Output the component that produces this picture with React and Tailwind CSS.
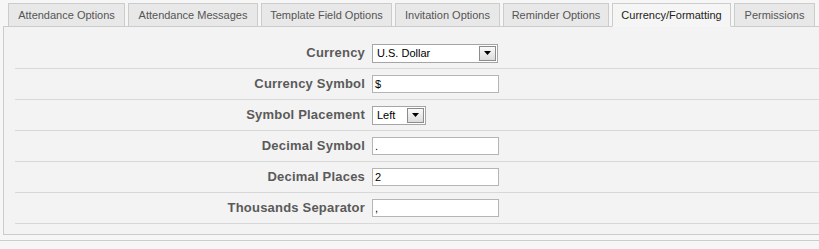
import React from 'react';

const tabs = [
  { label: 'Attendance Options', w: 'w-[117px]' },
  { label: 'Attendance Messages', w: 'w-[130px]' },
  { label: 'Template Field Options', w: 'w-[131px]' },
  { label: 'Invitation Options', w: 'w-[105px]' },
  { label: 'Reminder Options', w: 'w-[106px]' },
  { label: 'Currency/Formatting', w: 'w-[119px]', active: true },
  { label: 'Permissions', w: 'w-[81px]' },
];

function Arrow() {
  return (
    <span className="flex items-center justify-center w-[17px] h-[15px] border border-[#8c8c8c] bg-gradient-to-b from-[#fafafa] to-[#dcdcdc]">
      <svg width="7" height="4" viewBox="0 0 7 4">
        <path d="M0 0h7L3.5 4z" fill="#000" />
      </svg>
    </span>
  );
}

function Select({ value, w }) {
  return (
    <div className={`flex items-center justify-between h-[19px] ${w} bg-white border border-[#a5a5a5] pl-[4px] pr-[1px] text-[11px] text-black`}>
      <span>{value}</span>
      <Arrow />
    </div>
  );
}

function TextBox({ value }) {
  return (
    <div className="flex items-center h-[18px] w-[127px] bg-white border border-[#b5b5b5] px-[2px] text-[11px] text-black leading-none">
      {value}
    </div>
  );
}

const rows = [
  { label: 'Currency', field: <Select value="U.S. Dollar" w="w-[126px]" /> },
  { label: 'Currency Symbol', field: <TextBox value="$" /> },
  { label: 'Symbol Placement', field: <Select value="Left" w="w-[54px]" /> },
  { label: 'Decimal Symbol', field: <TextBox value="." /> },
  { label: 'Decimal Places', field: <TextBox value="2" /> },
  { label: 'Thousands Separator', field: <TextBox value="," /> },
];

export default function App() {
  return (
    <div className="w-[819px] h-[249px] overflow-hidden bg-[#f6f6f6] font-['Liberation_Sans',Arial,sans-serif]">
      {/* tabs */}
      <div className="flex items-end gap-[3px] pl-[8px] pt-[3px] relative z-10">
        {tabs.map((t) => (
          <div
            key={t.label}
            className={`${t.w} h-[24px] -mb-px flex items-center justify-center border text-[11px] whitespace-nowrap ${
              t.active
                ? 'bg-[#f5f5f5] border-[#cccccc] border-b-[#f5f5f5] text-[#222]'
                : 'bg-[#e8e8e8] border-[#cccccc] text-[#555]'
            }`}
          >
            {t.label}
          </div>
        ))}
      </div>

      {/* panel */}
      <div className="ml-[3px] w-[830px] bg-[#f3f3f3] border border-[#cccccc] pl-[11px] pt-[11px] pb-[10px]">
        {rows.map((r) => (
          <div key={r.label} className="flex items-center h-[31px] border-b border-[#d8d8d8]">
            <div className="w-[350px] text-right text-[13px] font-bold text-[#5a5a5a] tracking-[0.2px]">
              {r.label}
            </div>
            <div className="ml-[7px]">{r.field}</div>
          </div>
        ))}
      </div>

      <div className="mt-[5px] border-t border-[#cccccc]" />
    </div>
  );
}
